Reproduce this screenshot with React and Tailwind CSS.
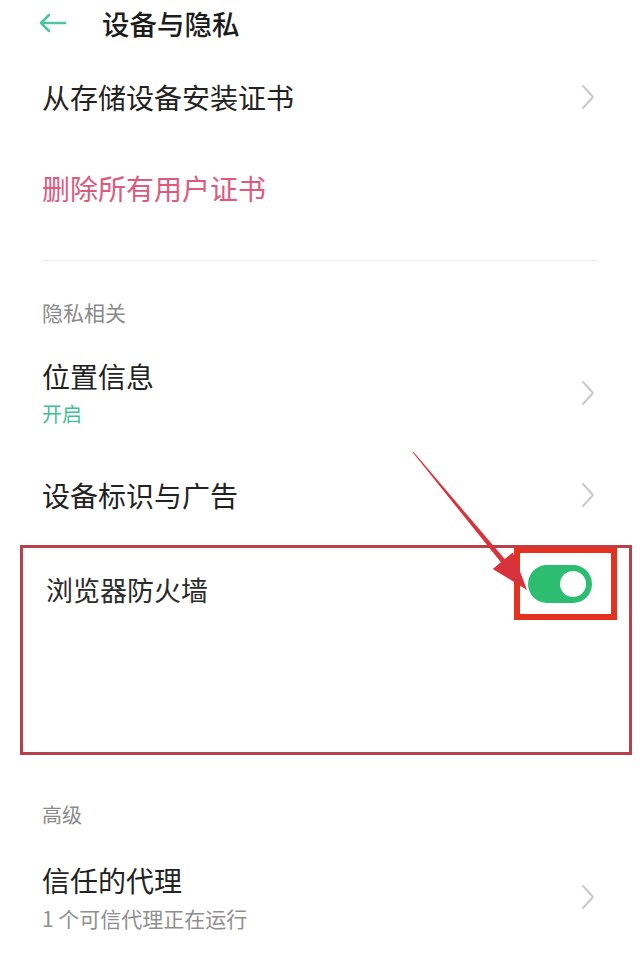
import React from 'react'

function Chevron() {
  return (
    <svg width="16" height="28" viewBox="0 0 16 28" fill="none">
      <path d="M3 3 L13 14 L3 25" stroke="#c9c9c9" strokeWidth="2" strokeLinecap="round" strokeLinejoin="round" />
    </svg>
  )
}

function BackArrow() {
  return (
    <svg width="30" height="22" viewBox="0 0 30 22" fill="none">
      <path d="M27 11 H3 M11 3 L3 11 L11 19" stroke="#4cc6a1" strokeWidth="2.5" strokeLinecap="round" strokeLinejoin="round" />
    </svg>
  )
}

function NavRow({ title, sub, height, color = 'text-[#222]' }) {
  return (
    <div className={`flex items-center justify-between pl-[42px] pr-[44px] ${height}`}>
      <div>
        <div className={`text-[28px] leading-[36px] ${color}`}>{title}</div>
        {sub}
      </div>
      <Chevron />
    </div>
  )
}

export default function App() {
  return (
    <div className="relative w-[640px] h-[957px] overflow-hidden bg-white font-['Noto_Sans_CJK_SC','Noto_Sans',sans-serif]">
      {/* header */}
      <div className="flex h-[46px] items-center pl-[38px]">
        <BackArrow />
        <div className="ml-[34px] text-[27.5px] font-medium leading-[36px] text-[#1c1c1c]">设备与隐私</div>
      </div>

      <NavRow title="从存储设备安装证书" height="h-[102px]" />

      <div className="flex h-[80px] items-center pl-[42px]">
        <div className="text-[28px] leading-[36px] text-[#de5a7c]">删除所有用户证书</div>
      </div>

      <div className="mx-[42px] h-[33px] border-b border-[#ececec]" />

      <div className="h-[80px] pl-[42px] pt-[37px]">
        <div className="text-[21px] leading-[28px] text-[#8a8a8a]">隐私相关</div>
      </div>

      <NavRow
        title="位置信息"
        height="h-[103px]"
        sub={<div className="mt-[6px] text-[20px] leading-[28px] text-[#3fbf98]">开启</div>}
      />

      <NavRow title="设备标识与广告" height="h-[101px]" />

      {/* highlighted firewall row */}
      <div className="relative mx-[8px] ml-[20px] h-[210px] border-[3px] border-[#b8404a]">
        <div className="pl-[23px] pt-[25px] text-[27px] leading-[34px] text-[#2a2a2a]">浏览器防火墙</div>
        <div className="absolute right-[12px] top-[-1px] flex h-[73px] w-[103px] items-center justify-start border-[6px] border-[#e5311f] pl-[8px]">
          <div className="flex h-[38px] w-[64px] items-center justify-end rounded-full bg-[#2dbd70] pr-[6px]">
            <div className="h-[26px] w-[26px] rounded-full bg-white" />
          </div>
        </div>
      </div>

      <div className="h-[74px] pl-[42px] pt-[46px]">
        <div className="text-[20px] leading-[28px] text-[#8a8a8a]">高级</div>
      </div>

      <NavRow
        title="信任的代理"
        height="h-[136px]"
        sub={<div className="mt-[6px] text-[21px] leading-[28px] text-[#8f8f8f]">1 个可信代理正在运行</div>}
      />

      {/* annotation arrow */}
      <svg className="pointer-events-none absolute left-0 top-0" width="640" height="957" viewBox="0 0 640 957">
        <polygon
          points="413.4,451.7 504.7,559.1 512.8,552.4 527,590 492.8,569 500.9,562.3 412.6,452.3"
          fill="#d8323c"
        />
      </svg>
    </div>
  )
}
